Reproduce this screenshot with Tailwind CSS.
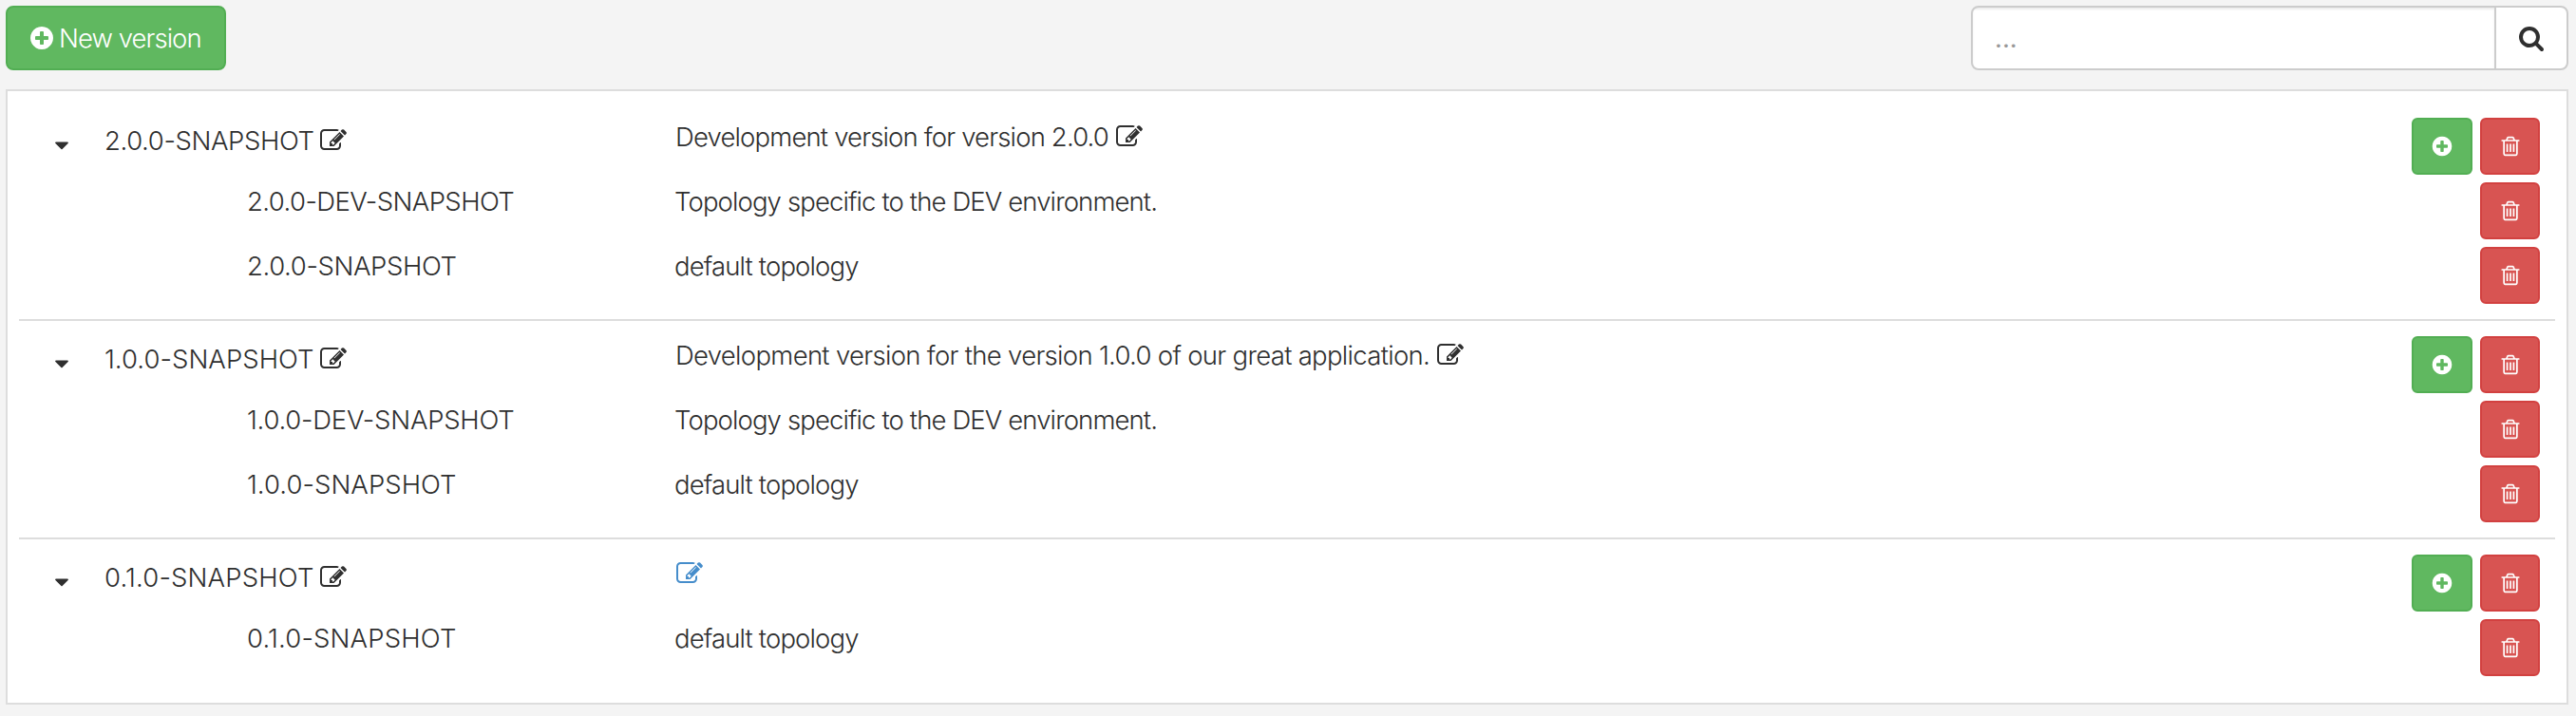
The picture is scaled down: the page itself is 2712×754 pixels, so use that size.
<!DOCTYPE html>
<html lang="en">
<head>
<meta charset="utf-8">
<title>Versions</title>
<script src="https://cdn.jsdelivr.net/npm/@tailwindcss/browser@4"></script>
</head>
<body class="min-h-screen bg-[#f4f4f4] px-1.5 pt-1.5 font-[Inter,'Liberation_Sans',sans-serif] text-[27.5px]/[40px] font-light text-[#2f2f2f] [&_svg]:block [&_svg]:shrink-0 [&_svg]:fill-current [&_span]:whitespace-nowrap">
<svg class="hidden!" aria-hidden="true">
  <symbol id="edit" viewBox="0 0 1792 1792"><path d="M888 1184l116-116-152-152-116 116v56h96v96h56zm440-720q-16-16-33 1l-350 350q-17 17-1 33t33-1l350-350q17-17 1-33zm80 594v190q0 119-84.500 203.500t-203.500 84.500h-832q-119 0-203.500-84.500t-84.500-203.500v-832q0-119 84.500-203.500t203.500-84.500h832q63 0 117 25 15 7 18 23 3 17-9 29l-49 49q-14 14-32 8-23-6-45-6h-832q-66 0-113 47t-47 113v832q0 66 47 113t113 47h832q66 0 113-47t47-113v-126q0-13 9-22l64-64q15-15 35-7t20 29zm-96-738l288 288-672 672h-288v-288zm444 132l-92 92-288-288 92-92q28-28 68-28t68 28l152 152q28 28 28 68t-28 68z"/></symbol>
  <symbol id="plus" viewBox="0 0 1792 1792"><path d="M1344 960v-128q0-26-19-45t-45-19h-256v-256q0-26-19-45t-45-19h-128q-26 0-45 19t-19 45v256h-256q-26 0-45 19t-19 45v128q0 26 19 45t45 19h256v256q0 26 19 45t45 19h128q26 0 45-19t19-45v-256h256q26 0 45-19t19-45zm320-64q0 209-103 385.500t-279.500 279.500-385.500 103-385.500-103-279.500-279.500-103-385.500 103-385.500 279.500-279.500 385.500-103 385.500 103 279.500 279.500 103 385.500z"/></symbol>
  <symbol id="trash" viewBox="0 0 1792 1792"><path d="M704 736v576q0 14-9 23t-23 9h-64q-14 0-23-9t-9-23v-576q0-14 9-23t23-9h64q14 0 23 9t9 23zm256 0v576q0 14-9 23t-23 9h-64q-14 0-23-9t-9-23v-576q0-14 9-23t23-9h64q14 0 23 9t9 23zm256 0v576q0 14-9 23t-23 9h-64q-14 0-23-9t-9-23v-576q0-14 9-23t23-9h64q14 0 23 9t9 23zm128 724v-948h-896v948q0 22 7 40.500t14.500 27 10.500 8.500h832q3 0 10.500-8.500t14.500-27 7-40.500zm-672-1076h448l-48-117q-7-9-17-11h-317q-10 2-17 11zm928 32v64q0 14-9 23t-23 9h-96v948q0 83-47 143.500t-113 60.500h-832q-66 0-113-58.500t-47-141.500v-952h-96q-14 0-23-9t-9-23v-64q0-14 9-23t23-9h309l70-167q15-37 54-63t79-26h320q40 0 79 26t54 63l70 167h309q14 0 23 9t9 23z"/></symbol>
  <symbol id="search" viewBox="0 0 1792 1792"><path d="M1216 832q0-185-131.500-316.500t-316.500-131.500-316.500 131.500-131.500 316.500 131.500 316.500 316.500 131.500 316.500-131.500 131.500-316.500zm512 832q0 52-38 90t-90 38q-54 0-90-38l-343-342q-179 124-399 124-143 0-273.500-55.500t-225-150-150-225-55.500-273.500 55.500-273.500 150-225 225-150 273.500-55.500 273.500 55.500 225 150 150 225 55.500 273.500q0 220-124 399l343 343q37 37 37 90z"/></symbol>
  <symbol id="caret" viewBox="0 0 1792 1792"><path d="M1408 704q0 26-19 45l-448 448q-19 19-45 19t-45-19l-448-448q-19-19-19-45t19-45 45-19h896q26 0 45 19t19 45z"/></symbol>
</svg>

<header class="flex h-[68px] justify-between pr-0.5">
  <button class="flex w-[232px] items-start rounded-lg border-2 border-[#52ae53] bg-[#60b860] pt-[18px] pl-[22px] text-white">
    <svg class="size-7"><use href="#plus"/></svg>
    <span class="-mt-1.5 ml-1 -tracking-[0.95px]">New version</span>
  </button>
  <div class="flex w-[629px] overflow-hidden rounded-lg border-2 border-[#ccc] bg-white">
    <div class="w-[549px] pt-3 pl-[23px] text-[#999] shadow-[inset_0_2px_2px_rgba(0,0,0,0.075)]"><span class="font-normal">...</span></div>
    <button class="flex flex-1 items-start border-l-2 border-[#ccc] pt-[18px] pl-[23px]"><svg class="size-7"><use href="#search"/></svg></button>
  </div>
</header>

<main class="mt-5 mr-0.5 divide-y-2 divide-[#ddd] border-2 border-[#ddd] bg-white p-3">
  <section class="flex flex-col gap-2 p-4">
    <div class="grid h-[60px] grid-cols-[74px_600px_1fr_auto] items-start">
      <svg class="mt-[16.500px] ml-[17px] size-6"><use href="#caret"/></svg>
      <div class="mt-1 flex"><span class="w-[227px] -tracking-[0.38px]">2.0.0-SNAPSHOT</span><svg class="mt-1.5 size-7"><use href="#edit"/></svg></div>
      <div class="flex pl-px"><span class="w-[464px] -tracking-[0.84px]">Development version for version 2.0.0</span><svg class="mt-1.5 size-7"><use href="#edit"/></svg></div>
      <div class="flex gap-2 text-white">
        <button class="flex h-[60px] w-16 items-center justify-center rounded-md border-2 border-[#52ae53] bg-[#60b860]"><svg class="mb-px size-6"><use href="#plus"/></svg></button>
        <button class="flex h-[60px] w-[63px] items-center justify-center rounded-md border-2 border-[#d24140] bg-[#d85452]"><svg class="mb-px size-6"><use href="#trash"/></svg></button>
      </div>
    </div>
    <div class="grid h-[60px] grid-cols-[224px_450px_1fr_auto] items-start">
      <div></div><span class="-tracking-[0.58px]">2.0.0-DEV-SNAPSHOT</span><span class="-tracking-[0.88px]">Topology specific to the DEV environment.</span>
      <button class="flex h-[60px] w-[63px] items-center justify-center rounded-md border-2 border-[#d24140] bg-[#d85452] text-white"><svg class="mb-px size-6"><use href="#trash"/></svg></button>
    </div>
    <div class="grid h-[60px] grid-cols-[224px_450px_1fr_auto] items-start">
      <div></div><span class="-tracking-[0.38px]">2.0.0-SNAPSHOT</span><span class="-tracking-[0.86px]">default topology</span>
      <button class="flex h-[60px] w-[63px] items-center justify-center rounded-md border-2 border-[#d24140] bg-[#d85452] text-white"><svg class="mb-px size-6"><use href="#trash"/></svg></button>
    </div>
  </section>

  <section class="flex flex-col gap-2 p-4">
    <div class="grid h-[60px] grid-cols-[74px_600px_1fr_auto] items-start">
      <svg class="mt-[16.500px] ml-[17px] size-6"><use href="#caret"/></svg>
      <div class="mt-1 flex"><span class="w-[227px] tracking-[0.05px]">1.0.0-SNAPSHOT</span><svg class="mt-1.5 size-7"><use href="#edit"/></svg></div>
      <div class="flex pl-px"><span class="w-[802px] -tracking-[0.69px]">Development version for the version 1.0.0 of our great application.</span><svg class="mt-1.5 size-7"><use href="#edit"/></svg></div>
      <div class="flex gap-2 text-white">
        <button class="flex h-[60px] w-16 items-center justify-center rounded-md border-2 border-[#52ae53] bg-[#60b860]"><svg class="mb-px size-6"><use href="#plus"/></svg></button>
        <button class="flex h-[60px] w-[63px] items-center justify-center rounded-md border-2 border-[#d24140] bg-[#d85452]"><svg class="mb-px size-6"><use href="#trash"/></svg></button>
      </div>
    </div>
    <div class="grid h-[60px] grid-cols-[224px_450px_1fr_auto] items-start">
      <div></div><span class="-tracking-[0.23px]">1.0.0-DEV-SNAPSHOT</span><span class="-tracking-[0.88px]">Topology specific to the DEV environment.</span>
      <button class="flex h-[60px] w-[63px] items-center justify-center rounded-md border-2 border-[#d24140] bg-[#d85452] text-white"><svg class="mb-px size-6"><use href="#trash"/></svg></button>
    </div>
    <div class="grid h-[60px] grid-cols-[224px_450px_1fr_auto] items-start">
      <div></div><span class="tracking-[0.05px]">1.0.0-SNAPSHOT</span><span class="-tracking-[0.86px]">default topology</span>
      <button class="flex h-[60px] w-[63px] items-center justify-center rounded-md border-2 border-[#d24140] bg-[#d85452] text-white"><svg class="mb-px size-6"><use href="#trash"/></svg></button>
    </div>
  </section>

  <section class="flex flex-col gap-2 p-4">
    <div class="grid h-[60px] grid-cols-[74px_600px_1fr_auto] items-start">
      <svg class="mt-[16.500px] ml-[17px] size-6"><use href="#caret"/></svg>
      <div class="mt-1 flex"><span class="w-[227px] tracking-[0.17px]">0.1.0-SNAPSHOT</span><svg class="mt-1.5 size-7"><use href="#edit"/></svg></div>
      <div class="flex pl-0.5 text-[#468dcb]"><svg class="mt-1.5 size-7"><use href="#edit"/></svg></div>
      <div class="flex gap-2 text-white">
        <button class="flex h-[60px] w-16 items-center justify-center rounded-md border-2 border-[#52ae53] bg-[#60b860]"><svg class="mb-px size-6"><use href="#plus"/></svg></button>
        <button class="flex h-[60px] w-[63px] items-center justify-center rounded-md border-2 border-[#d24140] bg-[#d85452]"><svg class="mb-px size-6"><use href="#trash"/></svg></button>
      </div>
    </div>
    <div class="grid h-[60px] grid-cols-[224px_450px_1fr_auto] items-start">
      <div></div><span class="tracking-[0.17px]">0.1.0-SNAPSHOT</span><span class="-tracking-[0.86px]">default topology</span>
      <button class="flex h-[60px] w-[63px] items-center justify-center rounded-md border-2 border-[#d24140] bg-[#d85452] text-white"><svg class="mb-px size-6"><use href="#trash"/></svg></button>
    </div>
  </section>
</main>
</body>
</html>
